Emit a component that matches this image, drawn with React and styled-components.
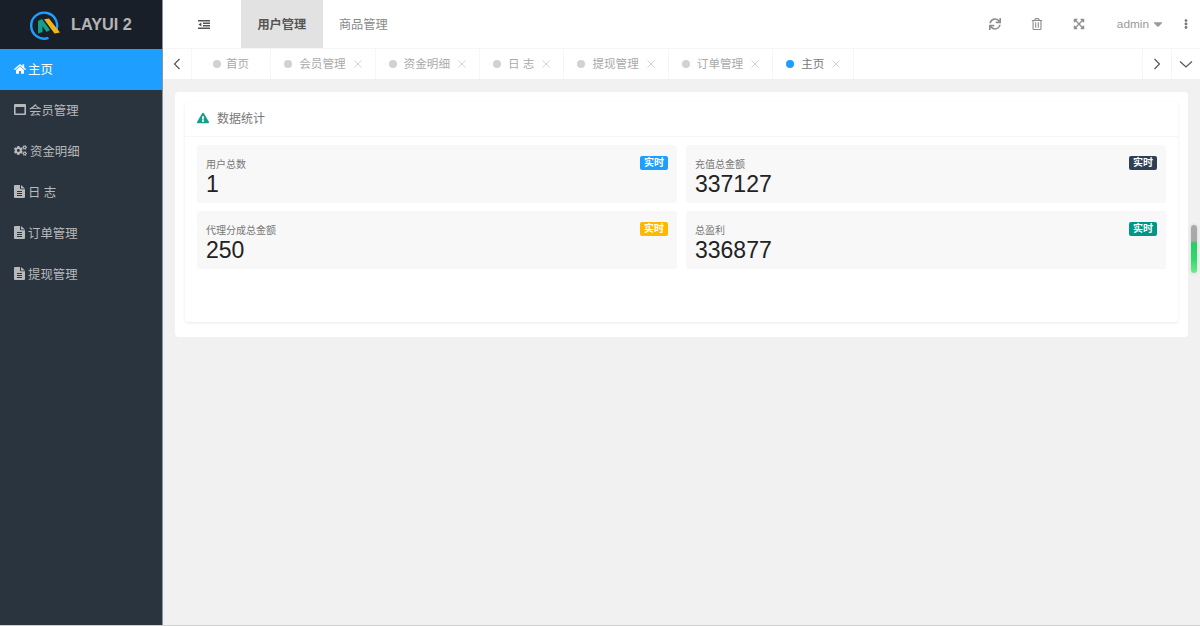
import React from 'react'
import styled, { createGlobalStyle } from 'styled-components'
import {
  FaHome, FaCogs, FaExclamationTriangle,
  FaSync, FaRegTrashAlt, FaExpandArrowsAlt, FaEllipsisV, FaCaretDown,
} from 'react-icons/fa'

const GlobalStyle = createGlobalStyle`
  html, body { margin: 0; padding: 0; height: 100%; overflow: hidden; }
  * { box-sizing: border-box; }
  body {
    font-family: "Liberation Sans", "Noto Sans CJK SC", sans-serif;
    background: #f1f1f1;
  }
`

const Layout = styled.div`
  display: flex;
  height: 100vh;
  position: relative;
  border-bottom: 1px solid #d0d0d0;
`

const Sidebar = styled.aside`
  width: 163px;
  flex: none;
  background: #2a343f;
  border-right: 1px solid #8f9498;
`

const Brand = styled.div`
  height: 49px;
  background: #191f28;
  display: flex;
  align-items: center;
  padding-left: 30px;
  gap: 11px;
  color: #b4b4b4;
  font-size: 16.3px;
  font-weight: 700;
`

const MenuItem = styled.div`
  height: 41px;
  display: flex;
  align-items: center;
  padding: 0 0 2px 14px;
  gap: ${p => p.$gap || 2}px;
  font-size: 12.4px;
  color: ${p => (p.$active ? '#fff' : '#b9b9b9')};
  background: ${p => (p.$active ? '#1e9fff' : 'transparent')};
  svg { font-size: ${p => p.$icon || 12}px; flex: none; }
`

const Main = styled.div`
  flex: 1;
  min-width: 0;
  display: flex;
  flex-direction: column;
`

const TopBar = styled.header`
  height: 49px;
  flex: none;
  background: #fff;
  border-bottom: 1px solid #f6f6f6;
  display: flex;
  align-items: stretch;
  color: #666;
  font-size: 12.2px;
`

const ToggleButton = styled.div`
  width: 78px;
  padding-left: 4px;
  display: flex;
  align-items: center;
  justify-content: center;
`

const NavItem = styled.div`
  width: 81.5px;
  display: flex;
  align-items: center;
  justify-content: center;
  color: ${p => (p.$active ? '#555' : '#888')};
  background: ${p => (p.$active ? '#e2e2e2' : 'transparent')};
  font-weight: ${p => (p.$active ? 700 : 400)};
`

const TopRight = styled.div`
  margin-left: auto;
  display: flex;
  align-items: center;
  color: #8f8f8f;
`

const ToolIcon = styled.div`
  width: 42px;
  display: flex;
  justify-content: center;
  font-size: 12px;
`

const UserName = styled.div`
  margin-left: 17px;
  display: flex;
  align-items: center;
  gap: 2px;
  font-size: 11.8px;
  color: #999;
  svg { font-size: 14px; }
`

const MoreIcon = styled.div`
  width: 35px;
  padding-left: 16px;
  display: flex;
  font-size: 10px;
  color: #777;
`

const TabBar = styled.nav`
  height: 30px;
  flex: none;
  background: #fff;
  display: flex;
  font-size: 11.6px;
`

const TabArrow = styled.div`
  width: ${p => p.$width}px;
  flex: none;
  display: flex;
  align-items: center;
  justify-content: center;
  border-right: ${p => (p.$border ? '1px solid #f6f6f6' : 'none')};
  border-left: ${p => (p.$left ? '1px solid #f6f6f6' : 'none')};
  svg { display: block; }
`

const Tab = styled.div`
  display: flex;
  align-items: center;
  height: 100%;
  padding: 0 ${p => (p.$first ? 21 : 13)}px;
  border-right: 1px solid #f6f6f6;
  color: ${p => (p.$active ? '#777' : '#aaa')};
  white-space: pre;
`

const TabLabel = styled.span`
  margin-bottom: 2px;
`

const TabDot = styled.i`
  width: 8px;
  height: 8px;
  border-radius: 50%;
  flex: none;
  margin-right: ${p => (p.$first ? 5 : 7)}px;
  background: ${p => (p.$active ? '#1e9fff' : '#d2d2d2')};
`

const TabClose = styled.span`
  margin-left: 8px;
  width: 8px;
  height: 8px;
  display: flex;
  svg { display: block; }
`

const TabSpacer = styled.div`
  flex: 1;
`

const Content = styled.main`
  flex: 1;
  padding: 13px 12px 0 12px;
`

const Panel = styled.section`
  background: #fff;
  border-radius: 4px;
  padding: 10px;
  padding-bottom: 15px;
`

const Card = styled.div`
  height: 220px;
  border-radius: 3px;
  box-shadow: 0 1px 3px rgba(0, 0, 0, 0.09);
  background: #fff;
`

const CardHeader = styled.div`
  height: 35px;
  padding: 0 0 3px 12px;
  border-bottom: 1px solid #f6f6f6;
  display: flex;
  align-items: center;
  gap: 8px;
  font-size: 12px;
  color: #777;
  svg { color: #16a08c; font-size: 12px; }
`

const StatGrid = styled.div`
  display: grid;
  grid-template-columns: 480px 480px;
  grid-auto-rows: 58px;
  gap: 8px 9px;
  padding: 8px 12px;
`

const Stat = styled.div`
  position: relative;
  background: #f8f8f8;
  border-radius: 3px;
  padding: 13px 9px 0;
  display: flex;
  flex-direction: column;
`

const StatLabel = styled.div`
  font-size: 10px;
  line-height: 13px;
  color: #777;
`

const StatValue = styled.div`
  font-size: 23px;
  line-height: 26px;
  color: #222;
`

const Badge = styled.span`
  position: absolute;
  top: 11px;
  right: 9px;
  width: 28px;
  height: 14px;
  border-radius: 2px;
  background: ${p => p.$color};
  color: #fff;
  font-size: 10px;
  font-weight: 700;
  line-height: 13px;
  text-align: center;
`

const ScrollThumb = styled.div`
  position: absolute;
  top: 225px;
  right: 3px;
  width: 6px;
  height: 48px;
  border-radius: 3px;
  background: linear-gradient(#a9a9a9 0 16px, #27cf66 18px, #2fd96e 34px, #6ee98c 48px);
  box-shadow: 0 0 4px rgba(0, 0, 0, 0.12);
`

const Logo = () => (
  <svg width="30" height="30" viewBox="0 0 30 30" fill="none" style={{ overflow: 'visible' }}>
    <path d="M25.5 22A13 13 0 1 0 18.5 27.9" stroke="#1e9fff" strokeWidth="2.4" />
    <path d="M8 23.5V11L12 9 20 20 16.5 22 12.5 16V22Z" fill="#12a08a" />
    <path d="M14 9.2 19 8.5 30 22.5 24.5 23.5Z" fill="#f5b31a" />
  </svg>
)

const ToggleIcon = () => (
  <svg width="12" height="9" viewBox="0 0 12 9" fill="#555">
    <path d="M0 0h12v1.4H0zM5 2.5h7v1.4H5zM5 5h7v1.4H5zM0 7.6h12V9H0zM3.4 2.4v4L0.4 4.4z" />
  </svg>
)

const WindowIcon = () => (
  <svg width="12" height="11" viewBox="0 0 12 11" fill="currentColor">
    <path fillRule="evenodd" d="M1 0h10a1 1 0 0 1 1 1v9a1 1 0 0 1-1 1H1a1 1 0 0 1-1-1V1a1 1 0 0 1 1-1zM1.6 3v6.4h8.8V3z" />
  </svg>
)

const FileIcon = () => (
  <svg width="11" height="13" viewBox="0 0 11 13" fill="currentColor">
    <path fillRule="evenodd" d="M0 1a1 1 0 0 1 1-1h5v3.5a.8.8 0 0 0 .8.8H11V12a1 1 0 0 1-1 1H1a1 1 0 0 1-1-1zM3 6v1h5V6zM3 8v1h5V8zM3 10v1h5v-1zM7 0l4 3.4H7z" />
  </svg>
)

const Chevron = ({ d }) => (
  <svg width="14" height="14" viewBox="0 0 14 14" fill="none" stroke="#555" strokeWidth="1.2">
    <path d={d} />
  </svg>
)

const CloseIcon = () => (
  <svg width="8" height="8" viewBox="0 0 8 8" stroke="#cfcfcf" strokeWidth="0.9">
    <path d="M0.5 0.5 7.5 7.5M7.5 0.5 0.5 7.5" />
  </svg>
)

const menu = [
  { label: '主页', icon: <FaHome />, active: true, size: 12 },
  { label: '会员管理', icon: <WindowIcon />, gap: 3 },
  { label: '资金明细', icon: <FaCogs />, gap: 3, size: 13 },
  { label: '日 志', icon: <FileIcon />, gap: 3 },
  { label: '订单管理', icon: <FileIcon />, gap: 3 },
  { label: '提现管理', icon: <FileIcon />, gap: 3 },
]

const tabs = [
  { label: '首页', first: true },
  { label: '会员管理' },
  { label: '资金明细' },
  { label: '日 志' },
  { label: '提现管理' },
  { label: '订单管理' },
  { label: '主页', active: true },
]

const stats = [
  { label: '用户总数', value: '1', color: '#1e9fff' },
  { label: '充值总金额', value: '337127', color: '#2f4056' },
  { label: '代理分成总金额', value: '250', color: '#ffb800' },
  { label: '总盈利', value: '336877', color: '#009688' },
]

export default function App() {
  return (
    <>
      <GlobalStyle />
      <Layout>
        <Sidebar>
          <Brand><Logo />LAYUI 2</Brand>
          {menu.map(m => (
            <MenuItem key={m.label} $active={m.active} $gap={m.gap} $icon={m.size}>
              {m.icon}{m.label}
            </MenuItem>
          ))}
        </Sidebar>
        <Main>
          <TopBar>
            <ToggleButton><ToggleIcon /></ToggleButton>
            <NavItem $active>用户管理</NavItem>
            <NavItem>商品管理</NavItem>
            <TopRight>
              <ToolIcon><FaSync /></ToolIcon>
              <ToolIcon><FaRegTrashAlt /></ToolIcon>
              <ToolIcon><FaExpandArrowsAlt /></ToolIcon>
              <UserName>admin<FaCaretDown /></UserName>
              <MoreIcon><FaEllipsisV /></MoreIcon>
            </TopRight>
          </TopBar>
          <TabBar>
            <TabArrow $width={29} $border><Chevron d="M9.5 2 4.5 7l5 5" /></TabArrow>
            {tabs.map(t => (
              <Tab key={t.label} $first={t.first} $active={t.active}>
                <TabDot $first={t.first} $active={t.active} />
                <TabLabel>{t.label}</TabLabel>
                {!t.first && <TabClose><CloseIcon /></TabClose>}
              </Tab>
            ))}
            <TabSpacer />
            <TabArrow $width={29} $left><Chevron d="M4.5 2l5 5-5 5" /></TabArrow>
            <TabArrow $width={29} $left><Chevron d="M1 4.5l6 5.5 6-5.5" /></TabArrow>
          </TabBar>
          <Content>
            <Panel>
              <Card>
                <CardHeader><FaExclamationTriangle />数据统计</CardHeader>
                <StatGrid>
                  {stats.map(s => (
                    <Stat key={s.label}>
                      <StatLabel>{s.label}</StatLabel>
                      <StatValue>{s.value}</StatValue>
                      <Badge $color={s.color}>实时</Badge>
                    </Stat>
                  ))}
                </StatGrid>
              </Card>
            </Panel>
          </Content>
        </Main>
        <ScrollThumb />
      </Layout>
    </>
  )
}
